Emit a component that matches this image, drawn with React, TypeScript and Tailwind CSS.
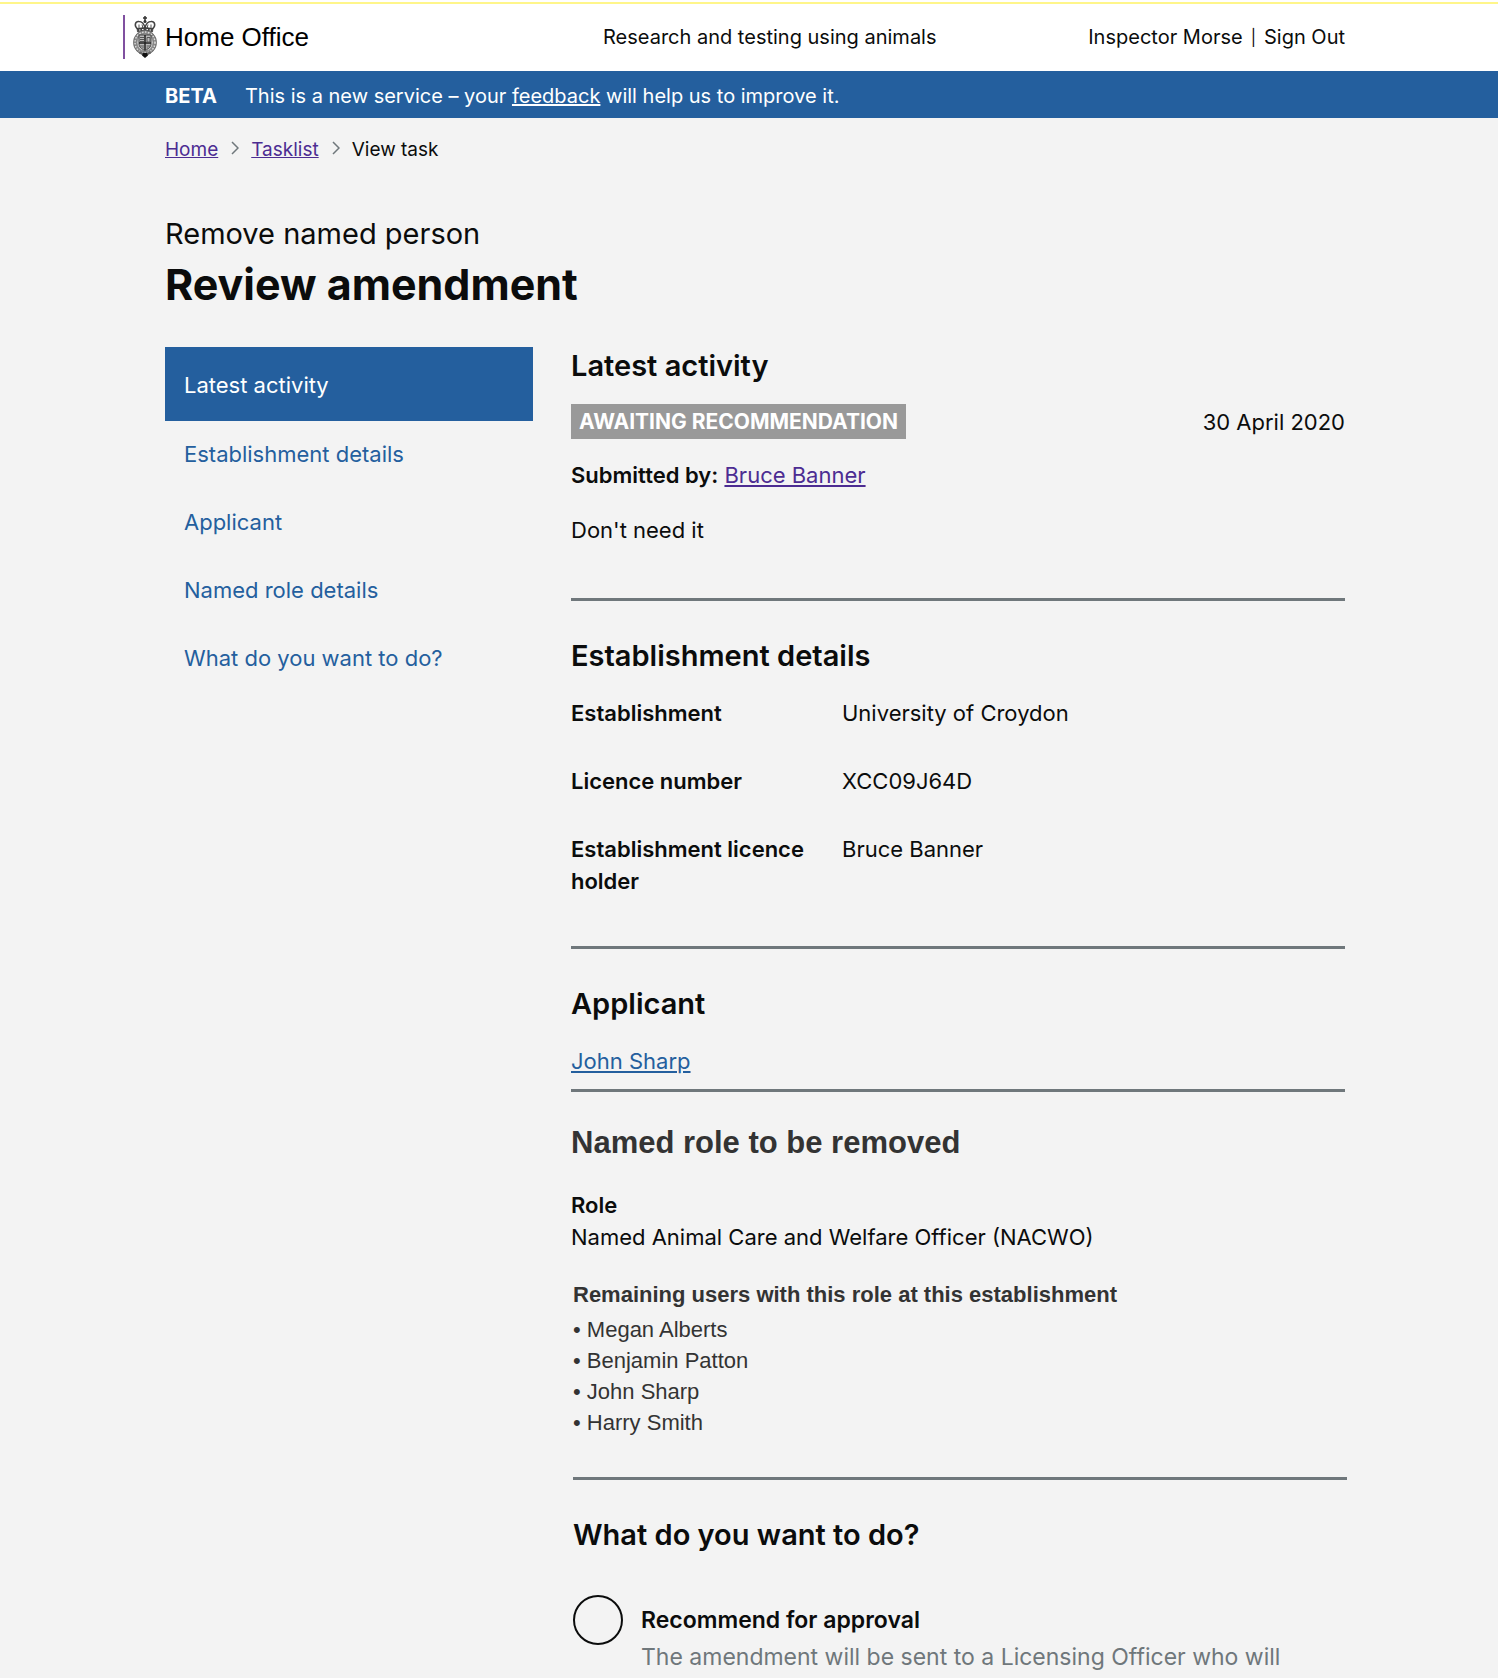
import React from "react";

const navItems = [
  { label: "Latest activity", href: "#latest-activity", active: true },
  { label: "Establishment details", href: "#establishment", active: false },
  { label: "Applicant", href: "#applicant", active: false },
  { label: "Named role details", href: "#role", active: false },
  { label: "What do you want to do?", href: "#decision", active: false },
];

const details = [
  { term: "Establishment", value: "University of Croydon" },
  { term: "Licence number", value: "XCC09J64D" },
  { term: "Establishment licence holder", value: "Bruce Banner" },
];

const users = ["Megan Alberts", "Benjamin Patton", "John Sharp", "Harry Smith"];

function Crest() {
  return (
    <svg viewBox="0 0 48 84" className="h-[42px] w-6" fill="none" aria-hidden="true">
      {/* crown */}
      <path d="M24 0v10M20 4h8" stroke="#333" strokeWidth="3" />
      <circle cx="24" cy="11" r="3" fill="#333" />
      <path
        d="M9 26C1 19 5 10 12 11c6 0 10 5 12 12 2-7 6-12 12-12 7-1 11 8 3 15"
        stroke="#444"
        strokeWidth="3"
      />
      <path d="M12 17v8M18 17l2 8M30 17l-2 8M36 17v8" stroke="#555" strokeWidth="2" />
      <path d="M8 25q16-4 32 0l-1 7q-15-4-30 0z" fill="#444" stroke="#222" strokeWidth="1" />
      <path d="M12 28h3M18 27h3M27 27h3M33 28h3" stroke="#eee" strokeWidth="2" />
      {/* garter */}
      <ellipse cx="24" cy="53" rx="20" ry="21" fill="#ddd" stroke="#888" strokeWidth="7" />
      <ellipse cx="24" cy="53" rx="20" ry="21" stroke="#ddd" strokeWidth="3" strokeDasharray="3 3" />
      <ellipse cx="24" cy="53" rx="23" ry="24" stroke="#555" strokeWidth="1" />
      <ellipse cx="24" cy="53" rx="16" ry="17" stroke="#555" strokeWidth="1" />
      {/* shield */}
      <path d="M12 38h24v18c0 6-5 10-12 13-7-3-12-7-12-13z" fill="#bbb" stroke="#444" strokeWidth="2" />
      <path d="M24 38v30M12 54h24" stroke="#222" strokeWidth="3" />
      <path d="M14 43h8M14 47h8M14 51h8M27 60h7M27 64h4" stroke="#555" strokeWidth="2" />
      <path d="M28 43v9h6v-9zM16 58v5M20 58v7" stroke="#555" strokeWidth="2" />
      {/* ribbon */}
      <path d="M13 70q11 8 22 0l1 5q-12 7-24 0z" fill="#666" />
      <path d="M20 74h8l2 5-6 5-6-5z" fill="#111" />
    </svg>
  );
}

function Chevron() {
  return (
    <svg viewBox="0 0 8 14" className="-mt-1 h-[14px] w-2" fill="none" aria-hidden="true">
      <path d="M1 1l6 6-6 6" stroke="#6f777b" strokeWidth="1.5" />
    </svg>
  );
}

function Heading({ children }: { children: React.ReactNode }) {
  return <h2 className="text-[29px] leading-[38px] font-semibold">{children}</h2>;
}

const container = "mx-auto max-w-[1192px] pl-3";
const rule = "border-t-3 border-[#6f777b]";

export default function App() {
  return (
    <div className="min-h-screen bg-[#f3f3f3] font-[Inter,sans-serif] text-[22px] leading-8 text-[#0b0c0c]">
      <header className="border-t-2 border-white bg-white">
        <div className="border-t-2 border-[#fff68a]">
          <div className={container}>
            <div className="flex h-[67px] items-center pb-[2px] text-[20px]">
              <div className="-ml-[42px] flex w-[480px] items-center">
                <div className="flex h-11 items-center gap-2 border-l-2 border-[#8050a0] pl-2">
                  <Crest />
                  <span className="font-['Liberation_Sans',Arial,sans-serif] text-[26px] text-black">
                    Home Office
                  </span>
                </div>
              </div>
              <span>Research and testing using animals</span>
              <nav className="ml-auto flex gap-2" aria-label="Account">
                <a href="#profile">Inspector Morse</a>
                <span className="text-[16px]">|</span>
                <a href="#signout">Sign Out</a>
              </nav>
            </div>
          </div>
        </div>
      </header>

      <div className="bg-[#245f9e] text-[20px] text-white">
        <div className={container}>
          <p className="flex h-[47px] items-center pt-[2px]">
            <strong className="mr-7 font-bold">BETA</strong>
            <span>
              This is a new service – your{" "}
              <a href="#feedback" className="underline">
                feedback
              </a>{" "}
              will help us to improve it.
            </span>
          </p>
        </div>
      </div>

      <div className={container}>
        <nav aria-label="Breadcrumb" className="pt-4 text-[19px]">
          <ol className="flex items-center">
            <li>
              <a href="#home" className="text-[#4c2c92] underline">Home</a>
            </li>
            <li className="flex items-center">
              <span className="mr-3 ml-[13px]"><Chevron /></span>
              <a href="#tasklist" className="text-[#4c2c92] underline">Tasklist</a>
            </li>
            <li className="flex items-center">
              <span className="mr-3 ml-[13px]"><Chevron /></span>
              View task
            </li>
          </ol>
        </nav>

        <h1 className="mt-12">
          <span className="block text-[29px] leading-10">Remove named person</span>
          <span className="block text-[43px] leading-[60px] font-bold">Review amendment</span>
        </h1>

        <div className="mt-[33px] flex items-start">
          <nav aria-label="Sections" className="mr-[38px] w-[368px] shrink-0">
            <ul>
              {navItems.map((item) => (
                <li key={item.label}>
                  <a
                    href={item.href}
                    className={
                      item.active
                        ? "block bg-[#245f9e] px-[19px] pt-[22px] pb-5 text-white"
                        : "block px-[19px] pt-[17px] pb-[19px] text-[#245f9e]"
                    }
                  >
                    {item.label}
                  </a>
                </li>
              ))}
            </ul>
          </nav>

          <main className="min-w-0 flex-1">
            <section id="latest-activity" className="pb-[52px]">
              <Heading>Latest activity</Heading>
              <div className="mt-[19px] flex items-center justify-between">
                <strong className="bg-[#999] px-2 py-[2px] text-[21px] leading-[31px] font-bold text-white">
                  AWAITING RECOMMENDATION
                </strong>
                <span>30 April 2020</span>
              </div>
              <p className="mt-5">
                <strong className="font-semibold">Submitted by:</strong>{" "}
                <a href="#bruce" className="text-[#4c2c92] underline">Bruce Banner</a>
              </p>
              <p className="mt-[23px]">Don't need it</p>
            </section>

            <section id="establishment" className={`${rule} pt-9 pb-[49px]`}>
              <Heading>Establishment details</Heading>
              <dl className="mt-[22px] flex flex-col gap-9">
                {details.map((row) => (
                  <div key={row.term} className="flex">
                    <dt className="mr-6 w-[247px] shrink-0 font-semibold">{row.term}</dt>
                    <dd>{row.value}</dd>
                  </div>
                ))}
              </dl>
            </section>

            <section id="applicant" className={`${rule} pt-9 pb-3`}>
              <Heading>Applicant</Heading>
              <p className="mt-[22px]">
                <a href="#john" className="text-[#245f9e] underline">John Sharp</a>
              </p>
            </section>

            <section id="role" className={`${rule} pt-[31px] pb-[39px]`}>
              <h2 className="font-['Liberation_Sans',Arial,sans-serif] text-[31px] leading-10 font-bold text-[#333]">
                Named role to be removed
              </h2>
              <h3 className="mt-[26px] font-semibold">Role</h3>
              <p>Named Animal Care and Welfare Officer (NACWO)</p>
              <div className="mt-[26px] pl-[2px] font-['Liberation_Sans',Arial,sans-serif] text-[#333]">
                <h3 className="font-bold">Remaining users with this role at this establishment</h3>
                <ul className="mt-[3px] leading-[31px]">
                  {users.map((u) => (
                    <li key={u} className="before:content-['•_']">{u}</li>
                  ))}
                </ul>
              </div>
            </section>

            <section id="decision" className="-mr-[2px] ml-[2px]">
              <div className={`${rule} pt-9`}>
                <Heading>What do you want to do?</Heading>
                <div className="mt-[41px] flex items-start gap-[18px]">
                  <input
                    type="radio"
                    id="recommend"
                    name="decision"
                    aria-describedby="recommend-hint"
                    className="size-[50px] shrink-0 appearance-none rounded-full border-2 border-[#0b0c0c] checked:bg-[#0b0c0c] checked:shadow-[inset_0_0_0_10px_#f3f3f3]"
                  />
                  <div className="pt-[9px]">
                    <label htmlFor="recommend" className="block text-[23px] font-semibold">
                      Recommend for approval
                    </label>
                    <p id="recommend-hint" className="mt-[5px] text-[23px] text-[#6f777b]">
                      The amendment will be sent to a Licensing Officer who will
                    </p>
                  </div>
                </div>
              </div>
            </section>
          </main>
        </div>
      </div>
    </div>
  );
}
